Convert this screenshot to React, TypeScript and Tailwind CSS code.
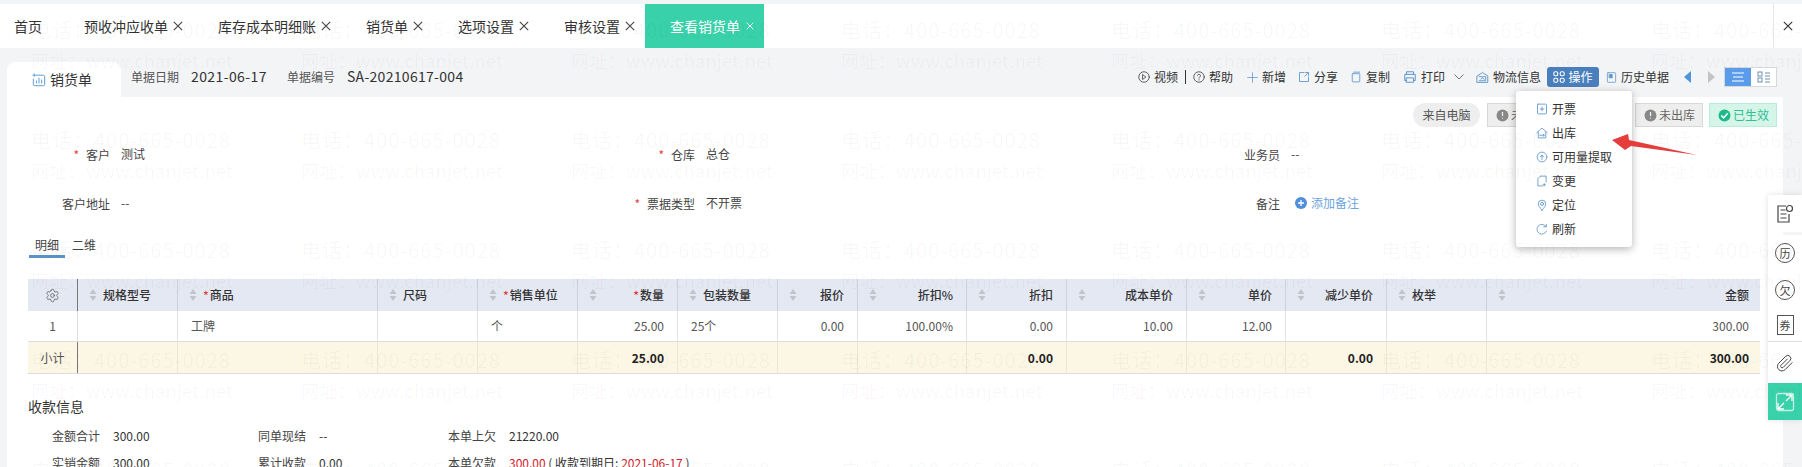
import React from "react";
import { Settings } from "lucide-react";

const blue = "#5b93c9";
const F = { fontFamily: '"Noto Sans CJK SC", sans-serif' };

function Ico({ children, s = 13, c = blue }: { children: React.ReactNode; s?: number; c?: string }) {
  return (
    <svg width={s} height={s} viewBox="0 0 16 16" fill="none" stroke={c} strokeWidth="1.1" strokeLinejoin="round" strokeLinecap="round" className="shrink-0">
      {children}
    </svg>
  );
}

function XIcon({ s = 10, c = "#444" }: { s?: number; c?: string }) {
  return (
    <svg width={s} height={s} viewBox="0 0 10 10" stroke={c} strokeWidth="1.1" className="shrink-0">
      <path d="M.8.8l8.400 8.400M9.200.8L.8 9.200" />
    </svg>
  );
}

const tabs = ["预收冲应收单", "库存成本明细账", "销货单", "选项设置", "审核设置"];

function TabBar() {
  return (
    <div className="h-[44px] mt-[4px] bg-white flex items-stretch text-[14px] text-[#333]">
      <div className="flex items-center pl-[14px] pr-[17px]">首页</div>
      {tabs.map((t) => (
        <div key={t} className="flex items-center pl-[25px] pr-[10px] gap-[5px]">
          <span>{t}</span>
          <XIcon />
        </div>
      ))}
      <div className="flex items-center pl-[25px] pr-[10px] gap-[6px] bg-[#38d1aa] text-white">
        <span>查看销货单</span>
        <XIcon s={8} c="#fff" />
      </div>
      <div className="ml-auto w-[29px] border-l border-[#e8e8e8] flex items-center justify-center">
        <XIcon s={10} c="#333" />
      </div>
    </div>
  );
}

function Tool({ icon, t, className = "" }: { icon: React.ReactNode; t: string; className?: string }) {
  return (
    <div className={"flex items-center gap-[4px] " + className}>
      {icon}
      <span>{t}</span>
    </div>
  );
}

function Toolbar() {
  return (
    <div className="flex items-center text-[12px] text-[#333] ml-auto pr-[25px] pt-[9px]">
      <Tool icon={<Ico s={12} c="#444"><circle cx="8" cy="8" r="7" /><path d="M6.500 5l4 3-4 3z" /></Ico>} t="视频" />
      <span className="mx-[7px] w-px h-[14px] bg-[#333]" />
      <Tool icon={<Ico s={12} c="#444"><circle cx="8" cy="8" r="7" /><path d="M6 6.200a2 2 0 1 1 3 1.800c-.7.4-1 .8-1 1.600M8 11.600v.4" /></Ico>} t="帮助" />
      <Tool className="ml-[14px]" icon={<Ico s={11}><path d="M8 1v14M1 8h14" /></Ico>} t="新增" />
      <Tool className="ml-[12px]" icon={<Ico s={12}><path d="M8 2H2v12h12V8M9 7l5-5M10 2h4v4" /></Ico>} t="分享" />
      <Tool className="ml-[12px]" icon={<Ico s={12}><rect x="3" y="3.500" width="10" height="11" rx="1" /><path d="M5 1.500h8" /></Ico>} t="复制" />
      <Tool className="ml-[13px]" icon={<Ico s={14}><path d="M4 5V2h8v3M4 12H2V5h12v7h-2M4 9h8v5H4z" /></Ico>} t="打印" />
      <svg width="10" height="6" viewBox="0 0 10 6" fill="none" stroke="#777" strokeWidth="1" className="ml-[9px] mr-[12px]">
        <path d="M.5.5L5 5 9.500.5" />
      </svg>
      <Tool icon={<Ico s={13}><path d="M1.500 6l6.500-4 6.500 4v8h-13zM4 7h8v5H4M6 10l2-1.500L10 10" /></Ico>} t="物流信息" />
      <div className="ml-[6px] h-[20px] w-[52px] rounded-[3px] bg-[#4a7fbd] text-white flex items-center justify-center gap-[3px]">
        <svg width="12" height="12" viewBox="0 0 12 12" fill="none" stroke="white" strokeWidth="1.1">
          <rect x=".8" y=".8" width="4" height="4" rx="1.500" />
          <rect x="7.200" y=".8" width="4" height="4" rx="1.500" />
          <rect x=".8" y="7.200" width="4" height="4" rx="1.500" />
          <rect x="7.200" y="7.200" width="4" height="4" rx="1.500" />
        </svg>
        <span>操作</span>
      </div>
      <Tool className="ml-[7px]" icon={<Ico s={11}><rect x="2" y="1" width="12" height="14" rx="1" /><rect x="5" y="3.500" width="4" height="5" fill={blue} /></Ico>} t="历史单据" />
      <svg width="7" height="12" viewBox="0 0 7 12" className="ml-[15px]"><path d="M7 0v12L0 6z" fill="#4f94dc" /></svg>
      <svg width="7" height="12" viewBox="0 0 7 12" className="ml-[17px]"><path d="M0 0v12l7-6z" fill="#c4c4c4" /></svg>
      <div className="ml-[9px] flex h-[20px] w-[53px] border border-[#d5d8dc]">
        <div className="w-[26px] bg-[#5b9cea] flex items-center justify-center">
          <svg width="14" height="10" viewBox="0 0 14 10" stroke="white" strokeWidth="1"><path d="M1 1h12M2 5h10M1 9h12" /></svg>
        </div>
        <div className="flex-1 bg-white flex items-center justify-center">
          <svg width="14" height="12" viewBox="0 0 14 12" stroke="#6f8fb0" strokeWidth="1" fill="none">
            <rect x="1" y="1" width="4" height="4" />
            <rect x="1" y="7" width="4" height="4" />
            <path d="M8 2h5M8 5h5M8 8h5M8 11h5" />
          </svg>
        </div>
      </div>
    </div>
  );
}

function Header() {
  return (
    <div className="h-[49px] flex">
      <div className="ml-[7px] mt-[14px] w-[114px] h-[35px] bg-white rounded-t-[8px] flex items-center pl-[25px] gap-[4px] text-[14px] text-[#333]">
        <Ico s={14} c="#5b9bd5">
          <path d="M5 2.500h8a1.500 1.500 0 0 1 1.500 1.500v9a1.500 1.500 0 0 1-1.500 1.500H3A1.500 1.500 0 0 1 1.500 13V7" />
          <path d="M5 11.500V9M8 11.500V6M11 11.500V8M2.500 1v3M1 2.500h3" />
        </Ico>
        <span>销货单</span>
      </div>
      <div className="flex items-center pl-[10px] pb-[2px] pt-[10px] gap-[12px] text-[#333]">
        <span className="text-[12px] text-[#555]">单据日期</span>
        <span className="text-[14px] tracking-[0.4px] mr-[8px]">2021-06-17</span>
        <span className="text-[12px] text-[#555]">单据编号</span>
        <span className="text-[14px] tracking-[0.3px]">SA-20210617-004</span>
      </div>
      <Toolbar />
    </div>
  );
}

function Tag({ t, ok, className }: { t: string; ok?: boolean; className: string }) {
  return (
    <div className={"h-[24px] flex items-center pl-[8px] gap-[2px] border text-[12px] " + className}>
      <svg width="13" height="13" viewBox="0 0 12 12" className="shrink-0">
        <circle cx="6" cy="6" r="5.500" fill={ok ? "#1cb98a" : "#888"} />
        {ok ? (
          <path d="M3 6l2.200 2.200L9 4" stroke="white" strokeWidth="1.400" fill="none" />
        ) : (
          <path d="M6 2.800v3.600M6 8v.8" stroke="white" strokeWidth="1.100" />
        )}
      </svg>
      <span>{t}</span>
    </div>
  );
}

function Field({ label, req, children }: { label: string; req?: boolean; children: React.ReactNode }) {
  return (
    <div className="flex items-center gap-[11px] text-[12px] text-[#444]">
      <div className="w-[103px] text-right">
        {req && <span className="text-[#e23c3c] mr-[7px]">*</span>}
        {label}
      </div>
      <div className="flex items-center gap-[4px] -translate-y-[1px]">{children}</div>
    </div>
  );
}

function Form() {
  return (
    <div className="grid grid-cols-[585px_585px_585px] auto-rows-[49px] mt-[3px]">
      <Field label="客户" req>测试</Field>
      <Field label="仓库" req>总仓</Field>
      <Field label="业务员">--</Field>
      <Field label="客户地址">--</Field>
      <Field label="票据类型" req>不开票</Field>
      <Field label="备注">
        <svg width="12" height="12" viewBox="0 0 12 12" className="ml-[4px]">
          <circle cx="6" cy="6" r="6" fill="#4f8fdc" />
          <path d="M6 3v6M3 6h6" stroke="white" strokeWidth="1.300" />
        </svg>
        <span className="text-[#6ba3dc]">添加备注</span>
      </Field>
    </div>
  );
}

const SORT = (
  <svg width="8" height="12" viewBox="0 0 8 12" className="shrink-0">
    <path d="M4 0l3.500 5H.5z" fill="#c0c5cc" />
    <path d="M4 12l3.500-5H.5z" fill="#c0c5cc" />
  </svg>
);

const cols = [
  { w: 100, t: "规格型号" },
  { w: 200, t: "商品", req: true },
  { w: 100, t: "尺码" },
  { w: 100, t: "销售单位", req: true },
  { w: 100, t: "数量", req: true, right: true },
  { w: 100, t: "包装数量" },
  { w: 80, t: "报价", right: true },
  { w: 109, t: "折扣%", right: true },
  { w: 100, t: "折扣", right: true },
  { w: 120, t: "成本单价", right: true },
  { w: 99, t: "单价", right: true },
  { w: 101, t: "减少单价", right: true },
  { w: 100, t: "枚举" },
  { w: 273, t: "金额", right: true },
];

const row1 = ["", "工牌", "", "个", "25.00", "25个", "0.00", "100.00%", "0.00", "10.00", "12.00", "", "", "300.00"];
const row2 = ["", "", "", "", "25.00", "", "", "", "0.00", "", "", "0.00", "", "300.00"];

function Table() {
  return (
    <div className="ml-[21px] mt-[21px] w-[1732px] text-[12px] text-[#333]">
      <div className="flex h-[32px] bg-[#e4e8f3]">
        <div className="w-[50px] border-r border-[#777] flex items-center justify-center">
          <Settings size={15} strokeWidth={1.2} className="text-[#555]" />
        </div>
        {cols.map((c) => (
          <div
            key={c.t}
            style={{ width: c.w }}
            className="border-r last:border-r-0 border-[#cdd1da] flex items-center pl-[11px] pr-[13px] last:pr-[11px] gap-[6px] font-medium"
          >
            {SORT}
            <span className={c.right ? "ml-auto" : ""}>
              {c.req && <span className="text-[#e23c3c] mr-[1px]">*</span>}
              {c.t}
            </span>
          </div>
        ))}
      </div>
      <div className="flex h-[31px] bg-white border-b border-[#ddd]">
        <div className="w-[50px] border-r border-[#ddd] flex items-center justify-center text-[#555]">1</div>
        {row1.map((v, i) => (
          <div
            key={i}
            style={{ width: cols[i].w }}
            className={"border-r last:border-r-0 border-[#e2e2e2] flex items-center px-[13px] last:pr-[11px] text-[#555] " + (cols[i].right ? "justify-end" : "")}
          >
            {v}
          </div>
        ))}
      </div>
      <div className="flex h-[32px] bg-[#fcf6e4] border-b border-[#ddd]">
        <div className="w-[50px] border-r border-[#777] flex items-center justify-center text-[#555]">小计</div>
        {row2.map((v, i) => (
          <div
            key={i}
            style={{ width: cols[i].w }}
            className={"border-r last:border-r-0 border-[#ece6d4] flex items-center px-[13px] last:pr-[11px] font-bold text-[#222] " + (cols[i].right ? "justify-end" : "")}
          >
            {v}
          </div>
        ))}
      </div>
    </div>
  );
}

function KV({ t, v, w }: { t: string; v: React.ReactNode; w: string }) {
  return (
    <div className={"flex gap-[13px] " + w}>
      <span className="text-[#444]">{t}</span>
      <span className="text-[#333]">{v}</span>
    </div>
  );
}

function Payment() {
  return (
    <div className="ml-[21px] text-[12px]">
      <div className="mt-[22px] text-[14px] leading-[20px] text-[#333]">收款信息</div>
      <div className="mt-[6px] ml-[24px] flex h-[27px] items-center">
        <KV t="金额合计" v="300.00" w="w-[206px]" />
        <KV t="同单现结" v="--" w="w-[190px]" />
        <KV t="本单上欠" v="21220.00" w="w-[300px]" />
      </div>
      <div className="ml-[24px] flex h-[27px] items-center">
        <KV t="实销金额" v="300.00" w="w-[206px]" />
        <KV t="累计收款" v="0.00" w="w-[190px]" />
        <KV
          t="本单欠款"
          w="w-[400px]"
          v={
            <>
              <span className="text-[#d0222a]">300.00</span> ( 收款到期日: <span className="text-[#d0222a]">2021-06-17</span> )
            </>
          }
        />
      </div>
    </div>
  );
}

const menu: [string, React.ReactNode][] = [
  ["开票", <><rect x="2" y="1.500" width="12" height="13" rx="1" /><path d="M8 5.500v5M5.500 8h5" /></>],
  ["出库", <><path d="M1 7.500L8 1.500l7 6M3 6.500v8h10v-8" /><path d="M5 11h6M9.500 9.500L11 11l-1.500 1.500" /></>],
  ["可用量提取", <><circle cx="8" cy="8" r="6.500" /><path d="M8 11.500v-6M5.500 8L8 5.500 10.500 8" /></>],
  ["变更", <><path d="M6 1.500h7.500v8M6 1.500L2.500 5v9.500H9" /><path d="M11 11.500v3M9.500 13h3" /></>],
  ["定位", <><path d="M8 15C4.500 11 3 8.800 3 6.500a5 5 0 0 1 10 0C13 8.800 11.500 11 8 15z" /><circle cx="8" cy="6.500" r="2" /></>],
  ["刷新", <><path d="M13.500 5A6.500 6.500 0 1 0 14 10.500" /><path d="M13.800 1.800V5h-3.200" /></>],
];

function Menu() {
  return (
    <div className="absolute left-[1516px] top-[91px] w-[116px] h-[156px] bg-white rounded-[3px] shadow-[0_2px_8px_rgba(0,0,0,0.3)] pt-[6px] pl-[20px] text-[12px] text-[#333]">
      {menu.map(([t, d]) => (
        <div key={t} className="h-[24px] flex items-center gap-[4px]">
          <Ico s={12}>{d}</Ico>
          <span>{t}</span>
        </div>
      ))}
    </div>
  );
}

function Arrow() {
  return (
    <svg width="100" height="30" viewBox="0 0 100 30" className="absolute left-[1605px] top-[132px]">
      <path d="M7 8L23 2L24 8L92 23L26 14L20 18z" fill="#e53c3c" />
    </svg>
  );
}

function Circ({ t }: { t: string }) {
  return (
    <div className="w-[20px] h-[20px] rounded-full border border-[#555] flex items-center justify-center text-[11px] text-[#444] leading-none">{t}</div>
  );
}

function Side() {
  return (
    <div className="absolute left-[1768px] top-[195px] w-[34px] flex flex-col shadow-[0_0_6px_rgba(0,0,0,0.12)]">
      <div className="h-[37px] bg-white flex items-center justify-center">
        <svg width="18" height="20" viewBox="0 0 18 20" fill="none" stroke="#444" strokeWidth="1.200">
          <path d="M10 2H2v16h11v-8M4.500 6h5M4.500 10h6M4.500 14h6" />
          <circle cx="13.500" cy="4.500" r="3" />
        </svg>
      </div>
      <div className="mt-[3px] h-[107px] bg-white flex flex-col items-center pt-[8px] border-b border-[#ddd]">
        <Circ t="历" />
        <div className="mt-[17px]"><Circ t="欠" /></div>
        <div className="mt-[15px] w-[17px] h-[20px] border border-[#555] flex items-center justify-center text-[11px] text-[#444]">券</div>
      </div>
      <div className="h-[41px] bg-white flex items-center justify-center">
        <svg width="18" height="18" viewBox="0 0 24 24" fill="none" stroke="#444" strokeWidth="1.300" strokeLinecap="round">
          <path d="M21.400 11.600l-9.200 9.200a6 6 0 0 1-8.500-8.500l9.200-9.200a4 4 0 0 1 5.700 5.700l-9.200 9.200a2 2 0 0 1-2.800-2.800l8.500-8.500" />
        </svg>
      </div>
      <div className="h-[37px] bg-[#38d1aa] flex items-center justify-center">
        <svg width="20" height="20" viewBox="0 0 20 20" fill="none" stroke="white" strokeWidth="1.300">
          <rect x="1.500" y="1.500" width="17" height="17" rx="2" strokeOpacity=".7" />
          <path d="M11 3h6v6M17 3l-6 6M9 17H3v-6M3 17l6-6" />
        </svg>
      </div>
    </div>
  );
}

function Watermark() {
  const cells = Array.from({ length: 7 * 5 });
  return (
    <div className="absolute inset-0 overflow-hidden pointer-events-none">
      <div className="grid grid-cols-[repeat(7,270px)] auto-rows-[110px] pl-[31px] pt-[15px] text-[rgba(0,0,0,0.035)]">
        {cells.map((_, i) => (
          <div key={i} className="leading-[30px] whitespace-nowrap">
            <div className="text-[20px] tracking-[1px]">电话：400-665-0028</div>
            <div className="text-[18px] tracking-[0.3px]">网址：www.chanjet.net</div>
          </div>
        ))}
      </div>
    </div>
  );
}

export default function App() {
  return (
    <div className="relative w-[1802px] h-[467px] overflow-hidden bg-[#f2f4f6]" style={F}>
      <TabBar />
      <Header />
      <div className="ml-[7px] w-[1776px] h-[370px] bg-white overflow-hidden">
        <div className="flex gap-[7px] pt-[6px] pl-[1406px]">
          <div className="h-[24px] w-[67px] rounded-full bg-[#eeeeee] flex items-center justify-center text-[12px] text-[#555] shrink-0">来自电脑</div>
          <Tag t="未开票" className="w-[68px] shrink-0 bg-[#eeeeee] border-[#d8d8d8] text-[#666]" />
          <Tag t="未出库" className="ml-[73px] w-[68px] shrink-0 bg-[#eeeeee] border-[#d8d8d8] text-[#666]" />
          <Tag t="已生效" ok className="-ml-[1px] w-[68px] shrink-0 bg-[#d6f5e9] border-[#b9ecd8] text-[#2fbf94]" />
        </div>
        <Form />
        <div className="ml-[22px] flex gap-[7px] h-[30px] text-[12px] text-[#444]">
          <div className="w-[36px] flex items-center justify-center border-b-[3px] border-[#5b93c9] pt-[6px]">明细</div>
          <div className="flex items-center pt-[6px] pb-[3px]">二维</div>
        </div>
        <Table />
        <Payment />
      </div>
      <Menu />
      <Arrow />
      <Side />
      <Watermark />
    </div>
  );
}
